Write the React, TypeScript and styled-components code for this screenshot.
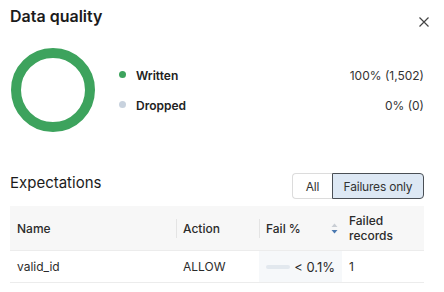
import React from "react";
import styled, { createGlobalStyle } from "styled-components";

const GlobalStyle = createGlobalStyle`
  body {
    margin: 0;
    background: #ffffff;
    font-family: Inter, "Liberation Sans", sans-serif;
    color: #1f2328;
  }
`;

const Page = styled.div`
  width: 444px;
  height: 292px;
  box-sizing: border-box;
  padding: 6px 20px 0 10px;
  display: flex;
  flex-direction: column;
  overflow: hidden;
`;

const TopRow = styled.div`
  display: flex;
  justify-content: space-between;
  align-items: flex-start;
`;

const Title = styled.h2`
  margin: 0;
  font-size: 16px;
  line-height: 20px;
  font-weight: 600;
  color: #1b1b1b;
`;

const CloseButton = styled.button`
  margin-top: 11px;
  margin-right: -5px;
  width: 10px;
  height: 10px;
  padding: 0;
  border: none;
  background: none;
  display: flex;
  cursor: pointer;
`;

const Summary = styled.div`
  margin-top: 21px;
  display: flex;
  align-items: center;
`;

const Donut = styled.svg`
  flex: none;
  margin-left: 1px;
`;

const Legend = styled.div`
  flex: 1;
  margin-left: 24px;
  display: flex;
  flex-direction: column;
  gap: 10px;
`;

const LegendRow = styled.div`
  display: flex;
  align-items: center;
  height: 20px;
  font-size: 12px;
`;

const Dot = styled.span<{ $color: string }>`
  width: 7px;
  height: 7px;
  border-radius: 50%;
  background: ${(p) => p.$color};
  margin-right: 10px;
  margin-top: -2px;
`;

const LegendLabel = styled.span`
  font-weight: 600;
  color: #222;
`;

const LegendValue = styled.span`
  margin-left: auto;
  color: #333;
`;

const SectionRow = styled.div`
  margin-top: 41px;
  height: 26px;
  display: flex;
  align-items: center;
  justify-content: space-between;
`;

const SectionTitle = styled.h3`
  margin: 0 0 7px;
  font-size: 15px;
  font-weight: 400;
  color: #1b1b1b;
`;

const Toggle = styled.div`
  display: flex;
  height: 26px;
`;

const ToggleButton = styled.button<{ $active?: boolean; $first?: boolean }>`
  font-family: inherit;
  font-size: 12px;
  letter-spacing: -0.2px;
  white-space: nowrap;
  color: #333;
  padding: 0;
  height: 26px;
  box-sizing: border-box;
  cursor: pointer;
  background: ${(p) => (p.$active ? "#dde8f4" : "#ffffff")};
  border: 1px solid ${(p) => (p.$active ? "#4a4f55" : "#dcdcdc")};
  border-radius: ${(p) => (p.$first ? "4px 0 0 4px" : "0 4px 4px 0")};
  ${(p) => (p.$first ? "border-right: none; width: 40px;" : "width: 92px;")}
`;

const Table = styled.div`
  margin-top: 7px;
  display: grid;
  grid-template-columns: 166px 83px 83px 82px;
  font-size: 12px;
`;

const HeadCell = styled.div<{ $sep?: boolean }>`
  position: relative;
  height: 44px;
  background: #f7f7f7;
  border-bottom: 1px solid #ececec;
  display: flex;
  align-items: center;
  padding: 0 7px;
  font-weight: 500;
  color: #2b2b2b;
  line-height: 15px;
  ${(p) =>
    p.$sep &&
    `&::before {
      content: "";
      position: absolute;
      left: 0;
      top: 13px;
      height: 19px;
      border-left: 1px solid #e4e4e4;
    }`}
`;

const SortIcon = styled.svg`
  margin-left: auto;
  margin-right: -3px;
`;

const Cell = styled.div<{ $shade?: boolean }>`
  height: 31px;
  border-bottom: 1px solid #ececec;
  display: flex;
  align-items: center;
  padding: 0 7px;
  color: #2b2b2b;
  background: ${(p) => (p.$shade ? "#f6f8fa" : "transparent")};
`;

const Bar = styled.span`
  width: 24px;
  height: 4px;
  border-radius: 2px;
  background: #e2e8ee;
`;

const Percent = styled.span`
  margin-left: auto;
  font-size: 13px;
`;

export default function App() {
  return (
    <>
      <GlobalStyle />
      <Page>
        <TopRow>
          <Title>Data quality</Title>
          <CloseButton aria-label="Close">
            <svg width="10" height="10" viewBox="0 0 10 10">
              <path d="M0.5 0.5 L9.5 9.5 M9.5 0.5 L0.5 9.5" stroke="#444" strokeWidth="1.2" />
            </svg>
          </CloseButton>
        </TopRow>

        <Summary>
          <Donut width="84" height="84" viewBox="0 0 84 84">
            <circle cx="42" cy="42" r="37" fill="none" stroke="#3da35d" strokeWidth="10" />
          </Donut>
          <Legend>
            <LegendRow>
              <Dot $color="#3da35d" />
              <LegendLabel>Written</LegendLabel>
              <LegendValue>100% (1,502)</LegendValue>
            </LegendRow>
            <LegendRow>
              <Dot $color="#c8d2de" />
              <LegendLabel>Dropped</LegendLabel>
              <LegendValue>0% (0)</LegendValue>
            </LegendRow>
          </Legend>
        </Summary>

        <SectionRow>
          <SectionTitle>Expectations</SectionTitle>
          <Toggle>
            <ToggleButton $first>All</ToggleButton>
            <ToggleButton $active>Failures only</ToggleButton>
          </Toggle>
        </SectionRow>

        <Table>
          <HeadCell>Name</HeadCell>
          <HeadCell $sep>Action</HeadCell>
          <HeadCell $sep>
            Fail %
            <SortIcon width="7" height="11" viewBox="0 0 7 11">
              <path d="M3.5 0.5 L6.5 4 L0.5 4 Z" fill="#c9ced4" />
              <path d="M3.5 10.5 L6.5 7 L0.5 7 Z" fill="#4b79b0" />
            </SortIcon>
          </HeadCell>
          <HeadCell>
            Failed
            <br />
            records
          </HeadCell>

          <Cell>valid_id</Cell>
          <Cell>ALLOW</Cell>
          <Cell $shade>
            <Bar />
            <Percent>&lt; 0.1%</Percent>
          </Cell>
          <Cell>1</Cell>
        </Table>
      </Page>
    </>
  );
}
